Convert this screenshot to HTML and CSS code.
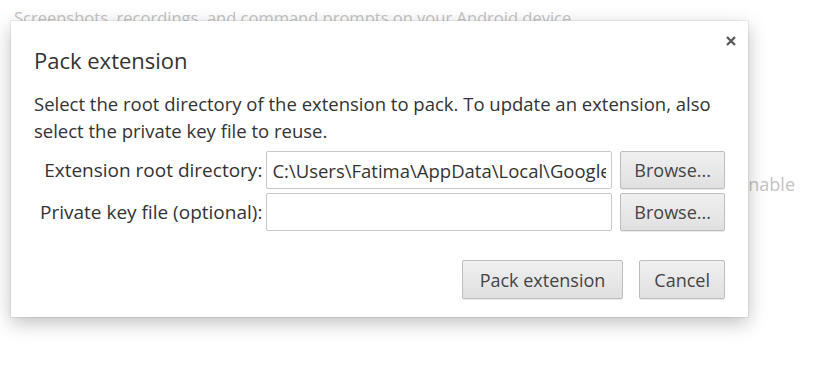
FILE: index.html
```html
<!DOCTYPE html>
<html>
<head>
  <meta charset="utf-8">
  <title>Pack extension</title>
  <link rel="stylesheet" href="styles.css">
</head>
<body>
  <div class="page">
    <div class="page-line">Screenshots, recordings, and command prompts on your Android device</div>
    <div class="page-row"><span class="enable">Enable</span></div>
  </div>

  <div class="overlay">
    <div class="dialog">
      <div class="dialog-head">
        <h1>Pack extension</h1>
        <svg class="close" width="10" height="10" viewBox="0 0 10 10"><path d="M1 1L9 9M9 1L1 9" stroke="#555" stroke-width="2.2"/></svg>
      </div>
      <p class="intro">Select the root directory of the extension to pack. To update an extension, also select the private key file to reuse.</p>
      <div class="form">
        <label for="root">Extension root directory:</label>
        <input id="root" value="C:\Users\Fatima\AppData\Local\Google\Chrome\User Data">
        <button>Browse...</button>
        <label for="key">Private key file (optional):</label>
        <input id="key" value="">
        <button>Browse...</button>
      </div>
      <div class="actions">
        <button class="pack">Pack extension</button>
        <button>Cancel</button>
      </div>
    </div>
  </div>
</body>
</html>
```

FILE: styles.css
```css
body { margin: 0; background: #fff; font-family: 'Open Sans', 'Noto Sans', sans-serif; color: #333; }
.page { padding: 7px 14px 0; color: #c4c4c4; font-size: 16.5px; }
.page-line { line-height: 22px; }
.page-row { display: flex; justify-content: flex-end; margin-top: 143px; padding-right: 13px; }
.enable { font-size: 18px; }

.overlay { position: absolute; top: 21px; left: 11px; }
.dialog { width: 737px; height: 296px; box-sizing: border-box; background: #fff; padding: 0 23px;
  box-shadow: 0 0 0 1px rgba(0,0,0,0.06), 0 6px 18px rgba(0,0,0,0.25); }
.dialog-head { display: flex; justify-content: space-between; align-items: flex-start; padding-top: 24px; }
h1 { margin: 0; font-size: 22px; font-weight: normal; color: #333; line-height: 30px; }
.close { margin: -9px -11px 0 0; }
.intro { margin: 15px -6px 7px 0; font-size: 18.5px; line-height: 27px; color: #333; }
.form { display: grid; grid-template-columns: auto 1fr auto; column-gap: 8px; row-gap: 4px; align-items: center; padding-left: 6px; }
.form label { text-align: right; font-size: 19px; margin-right: -4px; }
input { height: 38px; box-sizing: border-box; border: 1px solid #c8c8c8; border-radius: 2px; padding: 0 5px; font: inherit; font-size: 18.5px; color: #333; min-width: 0; }
button { height: 38px; box-sizing: border-box; padding: 0 13px; font: inherit; font-size: 18px; color: #444;
  border: 1px solid #bdbdbd; border-radius: 2px; background: linear-gradient(#f0f0f0, #e0e0e0); box-shadow: 0 1px 0 rgba(0,0,0,0.08); }
.actions { display: flex; justify-content: flex-end; gap: 16px; margin-top: 29px; }
.actions button { height: 39px; padding: 0 14px; }
.actions .pack { padding: 0 17px; }
```
